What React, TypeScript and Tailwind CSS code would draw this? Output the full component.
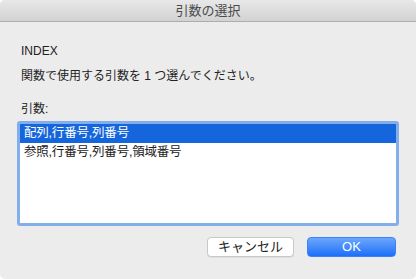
import React from "react";

export default function App() {
  const font = { fontFamily: '"Liberation Sans", "Noto Sans CJK JP", sans-serif' };
  return (
    <div className="w-[416px] h-[279px] bg-[#ececec] flex flex-col overflow-hidden rounded-[5px]" style={font}>
      <div className="h-[22px] shrink-0 bg-gradient-to-b from-[#e8e8e8] to-[#d2d2d2] border-b border-[#adadad] flex items-center justify-center text-[13px] text-[#4a4a4a] leading-none">
        引数の選択
      </div>
      <div className="flex flex-col px-[21px]">
        <div className="mt-[21px] text-[12px] leading-[16px] text-[#222]">INDEX</div>
        <div className="mt-[9px] text-[12px] leading-[16px] text-[#222]">関数で使用する引数を 1 つ選んでください。</div>
        <div className="mt-[17px] text-[12px] leading-[16px] text-[#222]">引数:</div>
      </div>
      <div className="mx-[17px] mt-[4px] h-[105px] rounded-[3px] bg-[#82aeec] p-[3px]">
        <div className="h-full bg-white flex flex-col">
          <div className="h-[19px] bg-[#1565dc] text-white text-[12.5px] leading-[19px] pl-[4px] tracking-[-0.2px]">配列,行番号,列番号</div>
          <div className="h-[19px] text-[#222] text-[12.5px] leading-[19px] pl-[4px] tracking-[-0.2px]">参照,行番号,列番号,領域番号</div>
        </div>
      </div>
      <div className="flex justify-end gap-[13px] mt-[11px] pr-[20px]">
        <div className="w-[87px] h-[20px] rounded-[4px] bg-white border border-[#c8c8c8] shadow-[0_0.5px_0.5px_rgba(0,0,0,0.1)] flex items-center justify-center text-[13px] text-[#222]">
          キャンセル
        </div>
        <div className="w-[89px] h-[20px] rounded-[4px] bg-gradient-to-b from-[#6aa6fc] to-[#1a6ef9] border border-[#3a82f6] flex items-center justify-center text-[13px] text-white">
          OK
        </div>
      </div>
    </div>
  );
}
